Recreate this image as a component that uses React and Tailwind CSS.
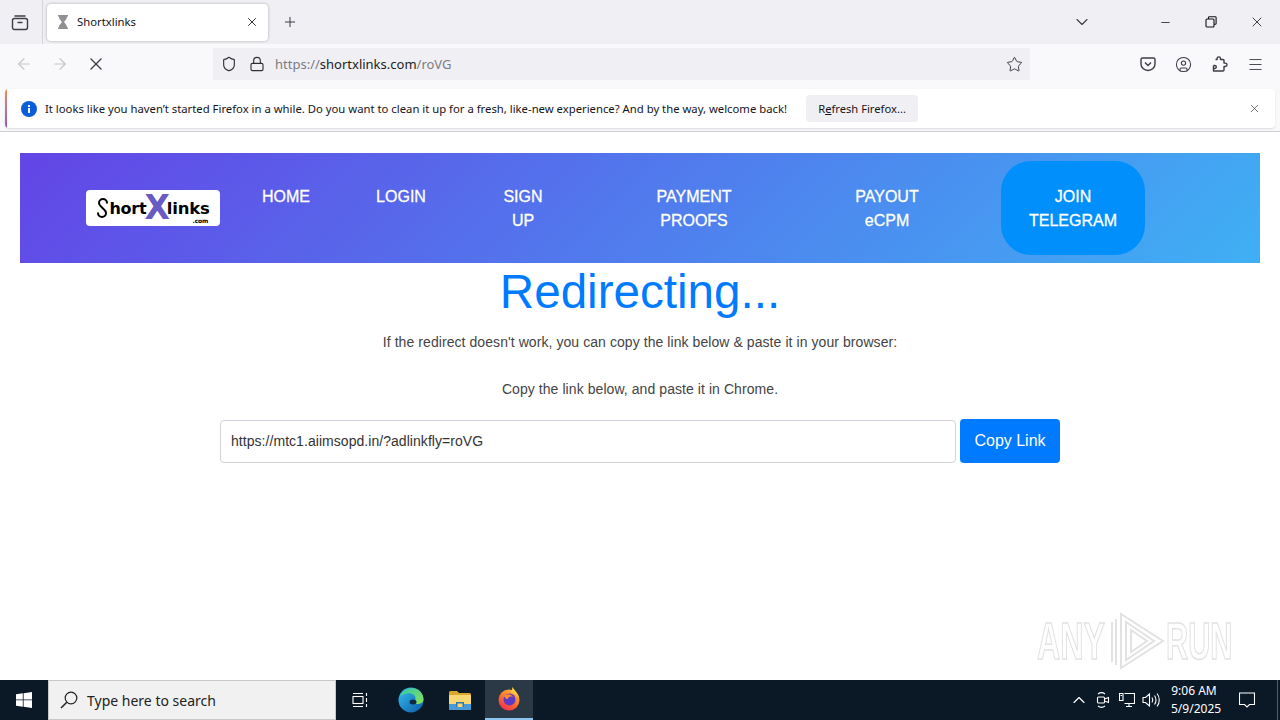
import React from "react";
import {
  ArrowLeft, ArrowRight, ChevronDown, ChevronUp, CircleUser, Lock, Menu, Minus, Plus, Shield, Star, X,
} from "lucide-react";

const chrome = "font-['Noto_Sans','Open_Sans',sans-serif]";

function TabsIcon() {
  return (
    <svg width="18" height="18" viewBox="0 0 18 18" fill="none" stroke="#3c3c46" strokeWidth="1.4">
      <rect x="1.5" y="5.5" width="15" height="11" rx="2" />
      <path d="M3.5 3h11M6.5 9.5h5" />
    </svg>
  );
}

function Hourglass() {
  return (
    <svg width="12" height="14" viewBox="0 0 12 14" fill="#8f8f94">
      <path d="M1 0h10v1.5H10c0 3-2.5 4-2.8 5.5C7.500 8.500 10 9.500 10 12.500h1V14H1v-1.500h1C2 9.500 4.500 8.500 4.800 7 4.500 5.500 2 4.500 2 1.500H1z" />
    </svg>
  );
}

function Restore() {
  return (
    <svg width="12" height="12" viewBox="0 0 12 12" fill="none" stroke="#111" strokeWidth="1.1">
      <rect x="1" y="3" width="8" height="8" rx="1" />
      <path d="M3.500 3V1.500a.8.8 0 0 1 .8-.8h6a.8.8 0 0 1 .8.8v6a.8.8 0 0 1-.8.8H9" />
    </svg>
  );
}

function Pocket() {
  return (
    <svg width="16" height="16" viewBox="0 0 16 16" fill="none" stroke="#3c3c46" strokeWidth="1.4">
      <path d="M2.500 2h11A1.500 1.500 0 0 1 15 3.500V8a7 6.500 0 0 1-14 0V3.500A1.500 1.500 0 0 1 2.500 2z" />
      <path d="M5 6.500 8 9.500l3-3" />
    </svg>
  );
}

function Extension() {
  return (
    <svg width="16" height="16" viewBox="0 0 16 16" fill="none" stroke="#3c3c46" strokeWidth="1.4" strokeLinejoin="round">
      <path d="M1.500 9.500V15H11a1 1 0 0 0 1-1v-3.500h1.300a1.700 1.700 0 0 0 0-3.400H12V4.500a1 1 0 0 0-1-1H8.500V2.600a1.700 1.700 0 0 0-3.400 0v.9H3.500" />
      <path d="M1.500 9.500h1.300a1.500 1.500 0 0 1 0 3H1.500" />
    </svg>
  );
}

function InfoDot() {
  return (
    <svg width="16" height="16" viewBox="0 0 16 16">
      <circle cx="8" cy="8" r="8" fill="#0a5fd8" />
      <rect x="7" y="7" width="2" height="5" fill="#fff" />
      <rect x="7" y="4" width="2" height="2" fill="#fff" />
    </svg>
  );
}

function WindowsLogo() {
  return (
    <svg width="16" height="16" viewBox="0 0 16 16" fill="#fff">
      <path d="M0 2.300 6.800 1.300V7.500H0zM7.600 1.200 16 0v7.500H7.600zM0 8.300h6.800v6.400L0 13.700zM7.600 8.300H16V16l-8.400-1.200z" />
    </svg>
  );
}

function SearchGlass() {
  return (
    <svg width="18" height="18" viewBox="0 0 18 18" fill="none" stroke="#222" strokeWidth="1.200">
      <circle cx="11" cy="7" r="5.800" />
      <path d="M6.800 11.200 1 17" strokeWidth="1.500" />
    </svg>
  );
}

function TaskView() {
  return (
    <svg width="16" height="16" viewBox="0 0 16 16" fill="none" stroke="#fff" strokeWidth="1.100">
      <path d="M1 1.500h10M1 14.500h10" />
      <rect x="1" y="4.500" width="10" height="7" />
      <path d="M14.500 1v3M14.500 6v4M14.500 12v3" />
    </svg>
  );
}

function EdgeLogo() {
  return (
    <svg width="26" height="26" viewBox="0 0 26 26">
      <defs>
        <linearGradient id="edgeA" x1="0" y1="0" x2="1" y2="1">
          <stop offset="0" stopColor="#35c1f1" />
          <stop offset="1" stopColor="#0c59a4" />
        </linearGradient>
        <linearGradient id="edgeB" x1="0" y1="0" x2="1" y2="1">
          <stop offset="0" stopColor="#2fc9a8" />
          <stop offset="1" stopColor="#8ee05a" />
        </linearGradient>
      </defs>
      <circle cx="13" cy="13" r="12.500" fill="url(#edgeA)" />
      <path d="M2 9C5 2 12 .500 17 1.500c5 1 8.500 6 8.500 11 0 3-3 4.500-6 4.500-3 0-5-1-5.500-2.500 2 .5 4-1 3.500-3.500C17 7.500 13 5.500 9 6.500 6 7.200 3.500 8.500 2 9z" fill="url(#edgeB)" />
      <ellipse cx="15" cy="15" rx="3.500" ry="2.500" fill="#0e2a44" />
    </svg>
  );
}

function FolderLogo() {
  return (
    <svg width="22" height="20" viewBox="0 0 22 20">
      <path d="M0 2.500A1.500 1.500 0 0 1 1.500 1H8l2 2h10.500A1.500 1.500 0 0 1 22 4.500V6H0z" fill="#d9a92e" />
      <rect y="5" width="22" height="15" rx="1" fill="#f8d775" />
      <rect y="14" width="22" height="6" fill="#4a9ad8" />
      <rect x="7" y="12" width="8" height="5" fill="#2f79b8" />
      <rect x="8.500" y="13.500" width="5" height="3.500" fill="#f8d775" />
    </svg>
  );
}

function FirefoxLogo() {
  return (
    <svg width="24" height="24" viewBox="0 0 24 24">
      <defs>
        <linearGradient id="ffA" x1="0.800" y1="0" x2="0.200" y2="1">
          <stop offset="0" stopColor="#ffbd3f" />
          <stop offset="0.550" stopColor="#ff6a2b" />
          <stop offset="1" stopColor="#f02a5a" />
        </linearGradient>
      </defs>
      <circle cx="12" cy="13" r="10.500" fill="url(#ffA)" />
      <path d="M15 0c2 2 5 5 7 11-3-4-6-5-9-6 2-1 2.500-3 2-5z" fill="#ffc93f" />
      <circle cx="12.500" cy="12.500" r="6" fill="#5b3bc4" />
      <path d="M7 9c2-2 7-3 9 1-3-1-5 0-5 2-2 0-3-1-4-3z" fill="#ff8a2e" />
    </svg>
  );
}

function MeetNow() {
  return (
    <svg width="16" height="18" viewBox="0 0 16 18" fill="none" stroke="#fff" strokeWidth="1.100">
      <rect x="2.500" y="6" width="7" height="6" rx="1" />
      <path d="M9.500 8l4-1.500v5L9.500 10M3 3c2-1.500 5-1.500 7 0M3 15c2 1.500 5 1.500 7 0" />
    </svg>
  );
}

function NetworkIcon() {
  return (
    <svg width="16" height="16" viewBox="0 0 16 16" fill="none" stroke="#fff" strokeWidth="1.100">
      <path d="M5.500 1.500h10v10h-10M.5 1.500h3.500v7H.5zM1.500 3.500h1.500M10 11.500v3M7 14.500h6" />
    </svg>
  );
}

function SpeakerIcon() {
  return (
    <svg width="18" height="16" viewBox="0 0 18 16" fill="none" stroke="#fff" strokeWidth="1.100">
      <path d="M1 5.500h2.500L7.500 2v12l-4-3.500H1zM10 5.500c1 1.500 1 3.500 0 5M12.500 3.500c2 2.500 2 6.500 0 9M15 1.500c3 3.500 3 9.500 0 13" />
    </svg>
  );
}

function Bubble() {
  return (
    <svg width="16" height="16" viewBox="0 0 16 16" fill="none" stroke="#fff" strokeWidth="1.100">
      <path d="M.5 1h15v11.500h-5L8 15l-2.500-2.500h-5z" />
    </svg>
  );
}

function ChainS() {
  return (
    <svg width="13" height="20" viewBox="0 0 13 20" fill="none" stroke="#000" strokeWidth="2">
      <path d="M11 5.500V5a4 4 0 0 0-8 0c0 2.500 2 3.500 3.500 5S10 12.500 10 15a4 4 0 0 1-8 0v-.5" />
    </svg>
  );
}

function Logo() {
  return (
    <div className="relative flex h-[36px] w-[134px] items-center justify-center rounded-[4px] bg-white font-['DejaVu_Sans',sans-serif] text-[16px] font-bold leading-none tracking-[-0.2px] text-black">
      <ChainS />
      <span className="mr-[-2px] mt-[2px]">hort</span>
      <span className="z-10 mt-[-2px] text-[33px] leading-none text-[#6a5bc4]">X</span>
      <span className="ml-[-3px] mt-[3px] text-[16.500px]">links</span>
      <span className="absolute bottom-[2px] right-[12px] text-[6px] leading-none">.com</span>
    </div>
  );
}

function NavItem({ className, children }) {
  return (
    <div className={`pt-[24px] text-center text-[16px] leading-[24px] text-white [-webkit-text-stroke:0.3px_white] ${className}`}>{children}</div>
  );
}

export default function App() {
  return (
    <div className="relative flex h-[720px] w-[1280px] flex-col overflow-hidden bg-white">
      {/* tab strip */}
      <div className={`flex h-[44px] shrink-0 items-center bg-[#f0f0f4] text-[#15141a] ${chrome}`}>
        <div className="flex h-full w-[43px] items-center justify-center border-r border-[#d5d5da] pr-[2px]">
          <TabsIcon />
        </div>
        <div className="ml-[4px] flex h-[37px] w-[221px] items-center rounded-[4px] bg-white pl-[10px] pr-[9px] shadow-[0_0_3px_rgba(0,0,0,0.3)]">
          <Hourglass />
          <span className="ml-[8px] flex-1 text-[11.300px]">Shortxlinks</span>
          <X size={14} strokeWidth={1.500} />
        </div>
        <Plus size={16} strokeWidth={1.500} className="ml-[14px] text-[#3c3c46]" />
        <div className="ml-auto flex items-center">
          <ChevronDown size={20} strokeWidth={1.300} className="mr-[67px] text-[#3c3c46]" />
          <Minus size={13} strokeWidth={1.300} className="mr-[33px] text-black" />
          <div className="mr-[32px]"><Restore /></div>
          <X size={16} strokeWidth={1.100} className="mr-[15px] text-black" />
        </div>
      </div>

      {/* nav bar */}
      <div className={`flex h-[44px] shrink-0 items-center bg-[#f9f9fb] pb-[4px] ${chrome}`}>
        <ArrowLeft size={18} strokeWidth={1.500} className="ml-[15px] text-[#c5c5c9]" />
        <ArrowRight size={18} strokeWidth={1.500} className="ml-[18px] text-[#c5c5c9]" />
        <X size={20} strokeWidth={1.500} className="ml-[17px] text-[#3c3c46]" />
        <div className="ml-[107px] flex h-[32px] w-[817px] items-center bg-[#f0f0f4] pl-[8px] pr-[7px] text-[#2f2f36]">
          <Shield size={16} strokeWidth={1.700} />
          <Lock size={16} strokeWidth={1.700} className="ml-[12px]" />
          <span className="ml-[10px] flex-1 pt-[2px] text-[13px] text-[#7b7b82]">
            https://<span className="text-[#1d1d22]">shortxlinks.com</span>/roVG
          </span>
          <Star size={17} strokeWidth={1.300} />
        </div>
        <div className="ml-auto flex items-center text-[#3c3c46]">
          <Pocket />
          <CircleUser size={17} strokeWidth={1.500} className="ml-[19px]" />
          <div className="ml-[20px]"><Extension /></div>
          <Menu size={17} strokeWidth={1.300} className="ml-[19px] mr-[16px]" />
        </div>
      </div>

      {/* info bar */}
      <div className={`h-[44px] shrink-0 border-b border-[#cfcfd4] bg-[#f9f9fb] px-[5px] pt-[1px] ${chrome}`}>
        <div className="flex h-[39px] items-center overflow-hidden rounded-[4px] bg-white pr-[14px] text-[#15141a] shadow-[0_1px_2px_rgba(0,0,0,0.12)]">
          <div className="mr-[14px] h-full w-[2px] bg-gradient-to-b from-[#f08a4a] to-[#9b4fc8]" />
          <InfoDot />
          <span className="ml-[8px] whitespace-nowrap pt-[1px] text-[11.300px]">
            It looks like you haven’t started Firefox in a while. Do you want to clean it up for a fresh, like-new experience? And by the way, welcome back!
          </span>
          <button className="ml-[19px] h-[27px] w-[112px] rounded-[4px] bg-[#f0f0f4] pt-[1px] text-[11.200px]">
            R<span className="underline">e</span>fresh Firefox...
          </button>
          <X size={13} strokeWidth={1.300} className="ml-auto text-[#3c3c46]" />
        </div>
      </div>

      {/* page */}
      <div className="min-h-0 flex-1 px-[20px] pt-[21px] font-['Liberation_Sans',Arial,sans-serif]">
        <div className="flex h-[110px] items-start bg-[linear-gradient(135deg,#6345e6,#3fb0f4)] pl-[66px] pt-[8px]">
          <div className="mt-[29px]"><Logo /></div>
          <NavItem className="ml-[9px] w-[114px]">HOME</NavItem>
          <NavItem className="w-[116px]">LOGIN</NavItem>
          <NavItem className="w-[128px]">SIGN<br />UP</NavItem>
          <NavItem className="w-[214px]">PAYMENT<br />PROOFS</NavItem>
          <NavItem className="w-[172px]">PAYOUT<br />eCPM</NavItem>
          <NavItem className="ml-[28px] h-[94px] w-[144px] rounded-[30px] bg-[#0190fb]">JOIN<br />TELEGRAM</NavItem>
        </div>

        <h1 className="text-center text-[47.600px] leading-[57.600px] text-[#007bff]">Redirecting...</h1>
        <p className="mt-[9px] text-center text-[14px] leading-[24px] tracking-[0.070px] text-[#444]">
          If the redirect doesn't work, you can copy the link below &amp; paste it in your browser:
        </p>
        <p className="mt-[23px] text-center text-[14px] leading-[24px] tracking-[0.070px] text-[#444]">
          Copy the link below, and paste it in Chrome.
        </p>
        <div className="mx-auto mt-[18px] flex w-[840px] items-end">
          <input
            readOnly
            value="https://mtc1.aiimsopd.in/?adlinkfly=roVG"
            className="h-[43px] flex-1 rounded-[4px] border border-[#ced4da] px-[10px] text-[14px] tracking-[0.050px] text-[#333] outline-none"
          />
          <button className="ml-[4px] h-[44px] w-[100px] rounded-[4px] bg-[#007bff] text-[16px] text-white">Copy Link</button>
        </div>
      </div>

      {/* taskbar */}
      <div className={`flex h-[40px] shrink-0 items-center bg-[#0b1826] text-white ${chrome}`}>
        <div className="flex w-[48px] justify-center"><WindowsLogo /></div>
        <div className="flex h-full w-[288px] items-center border border-[#c8c8c8] bg-[#f1f1f1] pl-[11px] text-[14px] text-[#222]">
          <SearchGlass />
          <span className="ml-[9px]">Type here to search</span>
        </div>
        <div className="flex w-[48px] justify-center"><TaskView /></div>
        <div className="flex w-[54px] justify-center"><EdgeLogo /></div>
        <div className="flex w-[47px] justify-center pr-[4px]"><FolderLogo /></div>
        <div className="flex h-full w-[48px] items-center justify-center border-b-[2px] border-[#8cc4f0] bg-[#2b3947]"><FirefoxLogo /></div>
        <div className="ml-auto flex items-center">
          <ChevronUp size={20} strokeWidth={1.400} />
          <div className="ml-[6px]"><MeetNow /></div>
          <div className="ml-[8px]"><NetworkIcon /></div>
          <div className="ml-[7px]"><SpeakerIcon /></div>
          <div className="ml-[11px] w-[46px] text-center text-[12px] leading-[18px]">9:06 AM<br />5/9/2025</div>
          <div className="ml-[22px]"><Bubble /></div>
          <div className="ml-[22px] mr-[2px] h-[40px] w-px bg-[#55606b]" />
        </div>
      </div>

      {/* sandbox watermark */}
      <div className="absolute left-[1037px] top-[610px] flex h-[62px] items-center font-['Liberation_Sans',sans-serif] text-[52px] font-bold leading-none text-white blur-[0.6px] [-webkit-text-stroke:1.5px_#e2e2e2]">
        <span className="inline-block w-[70px] origin-left scale-x-[0.62] whitespace-nowrap">ANY</span>
        <svg width="58" height="62" viewBox="0 0 58 62" fill="none" stroke="#e2e2e2" strokeWidth="2" className="ml-[1px]">
          <path d="M4 12v40M8 9v46M13 4l42 27-42 27zM18 12l28 19-28 19zM23 20l16 11-16 11z" />
        </svg>
        <span className="inline-block w-[67px] origin-left scale-x-[0.59] whitespace-nowrap">RUN</span>
      </div>
    </div>
  );
}
